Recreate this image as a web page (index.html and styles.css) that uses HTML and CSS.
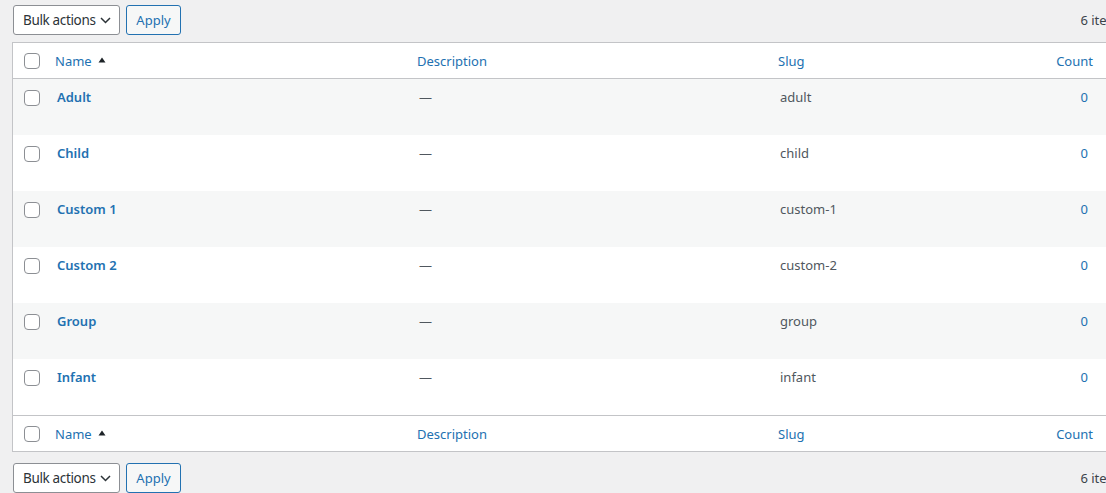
FILE: index.html
```html
<!DOCTYPE html>
<html lang="en">
<head>
<meta charset="utf-8">
<title>Tags</title>
<link rel="stylesheet" href="styles.css">
</head>
<body>
<div class="wrap">
  <div class="tablenav top">
    <div class="actions">
      <div class="select"><span class="sel-text">Bulk actions</span><svg class="chev" width="11" height="7" viewBox="0 0 11 7"><path d="M1 1 L5.5 5.5 L10 1" fill="none" stroke="#2c3338" stroke-width="1.5"/></svg></div>
      <button class="btn">Apply</button>
    </div>
    <div class="count-text">6 items</div>
  </div>

  <table class="list">
    <colgroup>
      <col class="c-check"><col class="c-name"><col class="c-desc"><col class="c-slug"><col class="c-count">
    </colgroup>
    <thead>
      <tr>
        <th class="check"><span class="cb"></span></th>
        <th><a class="th-link">Name <svg class="sort" width="8" height="6" viewBox="0 0 8 6"><path d="M0.5 5.5 L4 0.5 L7.5 5.5 Z" fill="#1d2327"/></svg></a></th>
        <th><a class="th-link">Description</a></th>
        <th><a class="th-link">Slug</a></th>
        <th class="num"><a class="th-link">Count</a></th>
      </tr>
    </thead>
    <tbody>
      <tr class="alt"><td class="check"><span class="cb"></span></td><td><a class="name">Adult</a></td><td class="muted">—</td><td class="muted">adult</td><td class="num"><a class="cnt">0</a></td></tr>
      <tr><td class="check"><span class="cb"></span></td><td><a class="name">Child</a></td><td class="muted">—</td><td class="muted">child</td><td class="num"><a class="cnt">0</a></td></tr>
      <tr class="alt"><td class="check"><span class="cb"></span></td><td><a class="name">Custom 1</a></td><td class="muted">—</td><td class="muted">custom-1</td><td class="num"><a class="cnt">0</a></td></tr>
      <tr><td class="check"><span class="cb"></span></td><td><a class="name">Custom 2</a></td><td class="muted">—</td><td class="muted">custom-2</td><td class="num"><a class="cnt">0</a></td></tr>
      <tr class="alt"><td class="check"><span class="cb"></span></td><td><a class="name">Group</a></td><td class="muted">—</td><td class="muted">group</td><td class="num"><a class="cnt">0</a></td></tr>
      <tr><td class="check"><span class="cb"></span></td><td><a class="name">Infant</a></td><td class="muted">—</td><td class="muted">infant</td><td class="num"><a class="cnt">0</a></td></tr>
    </tbody>
    <tfoot>
      <tr>
        <th class="check"><span class="cb"></span></th>
        <th><a class="th-link">Name <svg class="sort" width="8" height="6" viewBox="0 0 8 6"><path d="M0.5 5.5 L4 0.5 L7.5 5.5 Z" fill="#1d2327"/></svg></a></th>
        <th><a class="th-link">Description</a></th>
        <th><a class="th-link">Slug</a></th>
        <th class="num"><a class="th-link">Count</a></th>
      </tr>
    </tfoot>
  </table>

  <div class="tablenav bottom">
    <div class="actions">
      <div class="select"><span class="sel-text">Bulk actions</span><svg class="chev" width="11" height="7" viewBox="0 0 11 7"><path d="M1 1 L5.5 5.5 L10 1" fill="none" stroke="#2c3338" stroke-width="1.5"/></svg></div>
      <button class="btn">Apply</button>
    </div>
    <div class="count-text">6 items</div>
  </div>
</div>
</body>
</html>
```

FILE: styles.css
```css
html, body {
  margin: 0;
  padding: 0;
  background: #f0f0f1;
  overflow: hidden;
}
body {
  font-family: "Noto Sans", "Open Sans", sans-serif;
  font-size: 13px;
  color: #3c434a;
}
.wrap {
  width: 1122px;
  padding-left: 12px;
}
.tablenav {
  display: flex;
  justify-content: space-between;
  align-items: center;
  height: 30px;
}
.tablenav.top {
  margin: 5px 0 7px;
}
.tablenav.bottom {
  margin: 11px 0 0;
}
.actions {
  display: flex;
  gap: 6px;
  padding-left: 1px;
}
.select {
  box-sizing: border-box;
  width: 107px;
  height: 30px;
  border: 1px solid #8c8f94;
  border-radius: 3px;
  background: #fff;
  color: #2c3338;
  font-size: 13.5px;
  display: flex;
  align-items: center;
  justify-content: space-between;
  padding: 0 8px 0 9px;
  white-space: nowrap;
}
.sel-text {
  letter-spacing: -0.35px;
}
.chev {
  display: block;
  flex: none;
  margin-top: 1px;
}
.btn {
  box-sizing: border-box;
  height: 30px;
  width: 55px;
  border: 1px solid #2271b1;
  border-radius: 3px;
  background: #f6f7f7;
  color: #2271b1;
  font-family: inherit;
  font-size: 13px;
  padding: 0;
}
.count-text {
  padding-right: 9px;
  color: #3c434a;
  white-space: nowrap;
}
.list {
  width: 1122px;
  table-layout: fixed;
  border-collapse: separate;
  border-spacing: 0;
  border: 1px solid #c3c4c7;
  background: #fff;
}
.c-check { width: 34px; }
.c-name { width: 362px; }
.c-desc { width: 361px; }
.c-slug { width: 270px; }
.c-count { width: 93px; }

thead th, tfoot th {
  box-sizing: border-box;
  text-align: left;
  font-weight: 400;
  height: 36px;
  padding: 0;
  vertical-align: middle;
}
thead th { border-bottom: 1px solid #c3c4c7; }
tfoot th { border-top: 1px solid #c3c4c7; }
.th-link {
  display: flex;
  align-items: center;
  gap: 6px;
  padding: 0 8px;
  color: #2271b1;
  font-size: 13px;
}
th.num .th-link {
  justify-content: flex-end;
  padding-right: 40px;
}
.sort { display: block; margin-top: -2px; }
td {
  height: 56px;
  box-sizing: border-box;
  padding: 8px 10px;
  vertical-align: top;
  line-height: 20px;
}
tr.alt td { background: #f6f7f7; }
td.check, th.check {
  padding: 0 0 0 11px;
}
td.check .cb { margin-top: 11px; }
.cb {
  display: block;
  box-sizing: border-box;
  width: 16px;
  height: 16px;
  border: 1px solid #8c8f94;
  border-radius: 4px;
  background: #fff;
}
.name {
  color: #2271b1;
  font-weight: 600;
  font-size: 13px;
}
.muted { color: #50575e; }
td.num { text-align: right; padding-right: 45px; }
.cnt { color: #2271b1; }
```
